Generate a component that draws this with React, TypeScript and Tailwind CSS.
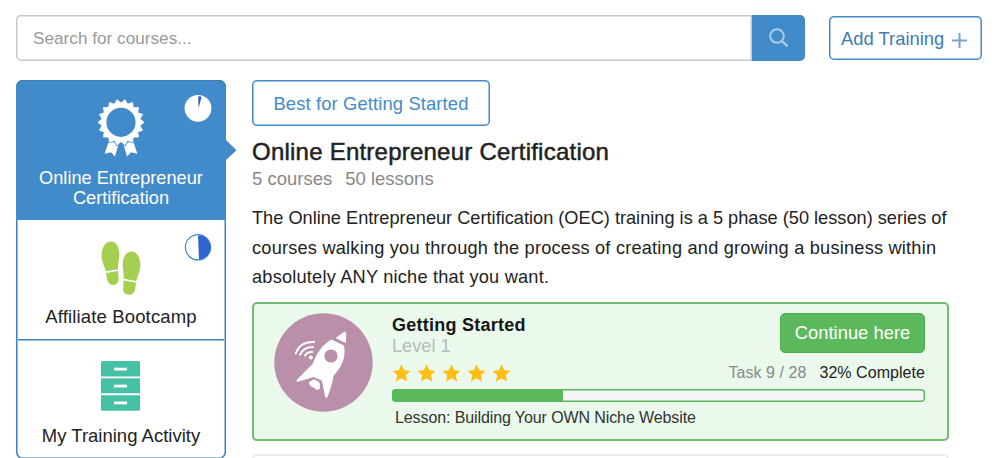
import type { ReactNode } from 'react';

const TEETH = 18;

// Points of the scalloped ring, first tooth 10 degrees off the top
const ringPoints = Array.from({ length: TEETH * 2 }, (_, i) => {
  const angle = ((10 + i * (180 / TEETH)) * Math.PI) / 180;
  const radius = i % 2 === 0 ? 23 : 19.2;
  return `${(24 + radius * Math.sin(angle)).toFixed(2)},${(24.3 - radius * Math.cos(angle)).toFixed(2)}`;
}).join(' ');

const AwardIcon = () => (
  <svg className="w-12 h-[60px]" viewBox="0 0 48 60" fill="#fff">
    <path d="M12 42.8 L21.6 46.2 L18 58.6 L14 54.2 L7.6 55.8 Z" />
    <path d="M36 42.8 L26.4 46.2 L30 58.6 L34 54.2 L40.4 55.8 Z" />
    <polygon points={ringPoints} stroke="#428bca" strokeWidth="2.2" strokeLinejoin="round" />
    <polygon points={ringPoints} stroke="#fff" strokeWidth="0.8" strokeLinejoin="round" />
    <circle cx="24" cy="24.3" r="14.6" fill="#428bca" />
  </svg>
);

const FootprintsIcon = () => (
  <svg className="w-10 h-[54px]" viewBox="0 0 40 54" fill="#a4cf4f">
    <path d="M10 .5 C15.5 .5 18.4 7 18.2 14 C18 19.5 16.8 23 17 28.2 L4.6 30.2 C4 25.5 .8 22 .6 14.5 C.4 7 4.5 .5 10 .5 Z" />
    <path d="M4.9 31.9 L17.1 29.9 C17 33 17.6 35 17.6 38 C17.6 41.5 15.6 44 12.2 44 C8 44 6.4 40.5 5.8 37 Z" />
    <path d="M30.5 10.5 C36 10.5 39.5 16.5 39.3 24 C39.1 31.5 36.1 36 35.3 40 L22.7 37.8 C23.1 33 21.7 29.5 21.7 24 C21.7 16 25 10.5 30.5 10.5 Z" />
    <path d="M22.5 39.5 L35 41.7 L34.3 47 C33.7 51.5 31.5 54 27.7 53.8 C23.9 53.6 22 51 22.1 47.5 C22.2 44.5 22.7 42.5 22.5 39.5 Z" />
  </svg>
);

const CabinetIcon = () => (
  <svg className="w-10 h-[50px]" viewBox="0 0 40 50" fill="#47c1a5">
    <path d="M1.5 0 H37.5 Q39 0 39 1.5 V15.5 H0 V1.5 Q0 0 1.5 0 Z" />
    <rect x="0" y="17.3" width="39" height="15" />
    <path d="M0 34.2 H39 V48.2 Q39 49.7 37.5 49.7 H1.5 Q0 49.7 0 48.2 Z" />
    <g fill="#fff">
      <rect x="13" y="6.7" width="13" height="2.8" />
      <rect x="13" y="23.7" width="13" height="2.8" />
      <rect x="13" y="40.5" width="13" height="2.8" />
    </g>
  </svg>
);

const RocketIcon = () => (
  <svg className="w-[99px] h-[99px] shrink-0" viewBox="0 0 99 99">
    <circle cx="49.5" cy="49.5" r="49.2" fill="#b98fa9" />
    <path
      d="M57.5 26.5 L70 32.5 C71.5 40 70 47.5 66 54.5 L59.5 63 C58.5 70 56 77.5 53.5 84 Q52.3 86 51.2 84 L47.8 67.5 L39.5 64 L24 68.8 Q21.8 68.8 22.8 66.8 L39 50.5 C42 41 48.5 31.5 57.5 26.5 Z"
      fill="#fff"
    />
    <path d="M62.2 25 L70 19.2 Q71.8 18.2 71.8 20.5 L71.6 29.5 Z" fill="#fff" stroke="#fff" strokeWidth="0.8" strokeLinejoin="round" />
    <circle cx="57" cy="43" r="6.6" fill="#b98fa9" />
    <path d="M35.2 69.5 L40 66.8 L45 69.5 L45.5 75.5 L43 76.5 L39.5 74 L36.5 72.8 Z" fill="#fff" stroke="#fff" strokeWidth="1" strokeLinejoin="round" />
    <g fill="none" stroke="#fff" strokeWidth="1.9" strokeLinecap="round">
      <path d="M21.8 40.5 C24.5 32.5 31.5 28.5 40.3 29" />
      <path d="M26 41.8 C28.5 36.5 33 33.8 39 34" />
      <path d="M31 42.5 C32.5 40 35 38.7 38.3 39" />
    </g>
    <circle cx="36.8" cy="44.6" r="2" fill="#fff" />
  </svg>
);

const Star = () => (
  <svg className="w-[19px] h-[18px]" viewBox="0 0 19 18" fill="#fdbf14">
    <path d="M9.5 .3 L12.2 6.2 L18.5 6.9 L13.8 11.1 L15.1 17.5 L9.5 14.3 L3.9 17.5 L5.2 11.1 L.5 6.9 L6.8 6.2 Z" />
  </svg>
);

type NavItemProps = {
  icon: ReactNode;
  badge?: ReactNode;
  children: ReactNode;
  className?: string;
};

const NavItem = ({ icon, badge, children, className = '' }: NavItemProps) => (
  <a className={`relative flex flex-col items-center text-center text-[18.5px] leading-5 ${className}`}>
    {icon}
    {badge}
    <span>{children}</span>
  </a>
);

const App = () => {
  const progress = 32;

  return (
    <div
      className="w-[1000px] h-[458px] overflow-hidden bg-white text-[#222]"
      style={{ fontFamily: '"Liberation Sans", Arial, sans-serif' }}
    >
      {/* Search bar */}
      <header className="flex items-start pt-[15px] pl-4">
        <div className="flex w-[789px] h-[46px]">
          <input
            className="flex-1 shadow-[inset_0_0_0_1.5px_#c8c8c8] rounded-l-[5px] pl-[17px] pt-[2px] text-[17.2px] text-[#222] placeholder:text-[#999] outline-none"
            placeholder="Search for courses..."
          />
          <button className="flex items-center justify-center w-[53px] bg-[#428bca] rounded-r-[5px]">
            <svg className="w-5 h-5" viewBox="0 0 20 20" fill="none" stroke="#a9cbe8" strokeWidth="2">
              <circle cx="8" cy="8" r="6.8" />
              <path d="M12.8 12.8 L18.6 18.4" strokeWidth="2.4" />
            </svg>
          </button>
        </div>
        <button className="ml-6 mt-px flex items-center w-[153px] h-[44px] shadow-[inset_0_0_0_1.5px_#428bca] rounded-[5px] pl-3 pt-[2px] text-[18.4px] text-[#3c7cb4] whitespace-nowrap">
          Add Training
          <svg className="ml-[8px] mt-[3px] w-[15px] h-[15px]" viewBox="0 0 15 15" stroke="#76a5cf" strokeWidth="2">
            <path d="M7.5 0 V15 M0 7.5 H15" />
          </svg>
        </button>
      </header>

      <div className="flex items-start pl-4 mt-[19px]">
        {/* Training tabs */}
        <nav className="w-[210px] h-[379px] shrink-0 p-0.5 shadow-[inset_0_0_0_1.5px_#3b82c0] rounded-[7px]">
          <NavItem
            className="-mx-0.5 -mt-0.5 h-[140px] bg-[#428bca] shadow-[inset_0_1px_0_#3b7fbb] rounded-t-[7px] pt-[18px] text-white"
            icon={<AwardIcon />}
            badge={
              <>
                <svg className="absolute right-[14px] top-[14px] w-7 h-7" viewBox="0 0 28 28">
                  <circle cx="14" cy="14.3" r="13.4" fill="#fff" />
                  <path d="M14.6 14 L14.2 2.2 Q16 2 17.6 2.8 Z" fill="#3355c0" />
                </svg>
                <svg className="absolute -right-[11px] top-[60px] w-3 h-5" viewBox="0 0 12 20" fill="#428bca">
                  <path d="M0 -1 L1 0 L11.5 10.3 L1 20 L0 20 Z" />
                </svg>
              </>
            }
          >
            <span className="block mt-[10px] text-[18.2px]">
              Online Entrepreneur
              <br />
              Certification
            </span>
          </NavItem>
          <NavItem
            className="h-[120px] border-b border-[#3b82c0] shadow-[0_0.5px_0_#3b82c0] pt-[21px]"
            icon={<FootprintsIcon />}
            badge={
              <svg className="absolute right-[12px] top-[13px] w-7 h-7" viewBox="0 0 28 28">
                <circle cx="14" cy="14.3" r="12.6" fill="#fff" stroke="#4289c8" strokeWidth="1.2" />
                <path d="M14 2.3 A12 12 0 0 1 15 26.3 Z" fill="#3164ce" />
              </svg>
            }
          >
            <span className="block mt-[12px] tracking-[0.15px]">Affiliate Bootcamp</span>
          </NavItem>
          <NavItem className="h-[118px] pt-[21px]" icon={<CabinetIcon />}>
            <span className="block mt-[15px]">My Training Activity</span>
          </NavItem>
        </nav>

        {/* Selected training */}
        <main className="w-[697px] ml-[26px]">
          <div className="flex items-center justify-center w-[238px] h-[46px] pt-px shadow-[inset_0_0_0_1.5px_#428bca] rounded-[5px] text-[18.4px] tracking-[0.12px] text-[#428bca]">
            Best for Getting Started
          </div>
          <h1 className="mt-[12px] text-2xl leading-7 whitespace-nowrap tracking-[0.23px] [-webkit-text-stroke:0.5px_#222]">
            Online Entrepreneur Certification
          </h1>
          <p className="mt-[2px] flex gap-[13px] text-[18.5px] leading-[22px] text-[#888]">
            <span>5 courses</span>
            <span>50 lessons</span>
          </p>
          <p className="mt-[14px] text-[18.2px] leading-[29.5px] whitespace-nowrap">
            The Online Entrepreneur Certification (OEC) training is a 5 phase (50 lesson) series of
            <br />
            <span className="tracking-[0.21px]">
              courses walking you through the process of creating and growing a business within
              <br />
              absolutely ANY niche that you want.
            </span>
          </p>

          <section className="flex mt-[9px] h-[139px] border-2 border-[#6fbd71] rounded-[5px] bg-[#eaf9ec] pt-[9px] pl-5 pr-[22px]">
            <RocketIcon />
            <div className="flex-1 ml-[19px]">
              <div className="flex justify-between">
                <div className="pt-px whitespace-nowrap">
                  <h2 className="text-[18px] leading-[22px] font-bold tracking-[0.25px] text-[#161616]">Getting Started</h2>
                  <p className="text-[18.2px] leading-[20px] text-[#b5bdb6]">Level 1</p>
                </div>
                <button className="w-[145px] h-10 rounded-[5px] border border-[#4cae4c] bg-[#5cb85c] pt-px text-[18.4px] text-white">
                  Continue here
                </button>
              </div>
              <div className="flex items-center justify-between h-[32px] mt-px">
                <div className="flex gap-[6px]">
                  {[1, 2, 3, 4, 5].map((n) => (
                    <Star key={n} />
                  ))}
                </div>
                <div className="flex gap-[13px] text-[16px] tracking-[0.05px] whitespace-nowrap">
                  <span className="text-[#888]">Task 9 / 28</span>
                  <span>32% Complete</span>
                </div>
              </div>
              <div className="h-[13px] shadow-[inset_0_0_0_1.5px_#5cb85c] rounded-[4px] bg-[#f5f5f5] overflow-hidden">
                <div className="h-full bg-[#5cb85c]" style={{ width: `${progress}%` }} />
              </div>
              <p className="mt-[6px] pl-[3px] text-[16px] leading-5 tracking-[-0.1px] text-[#333]">
                Lesson: Building Your OWN Niche Website
              </p>
            </div>
          </section>

          <section className="mt-[13px] h-20 border-2 border-[#ececec] rounded-[5px]" />
        </main>
      </div>
    </div>
  );
};

export default App;
